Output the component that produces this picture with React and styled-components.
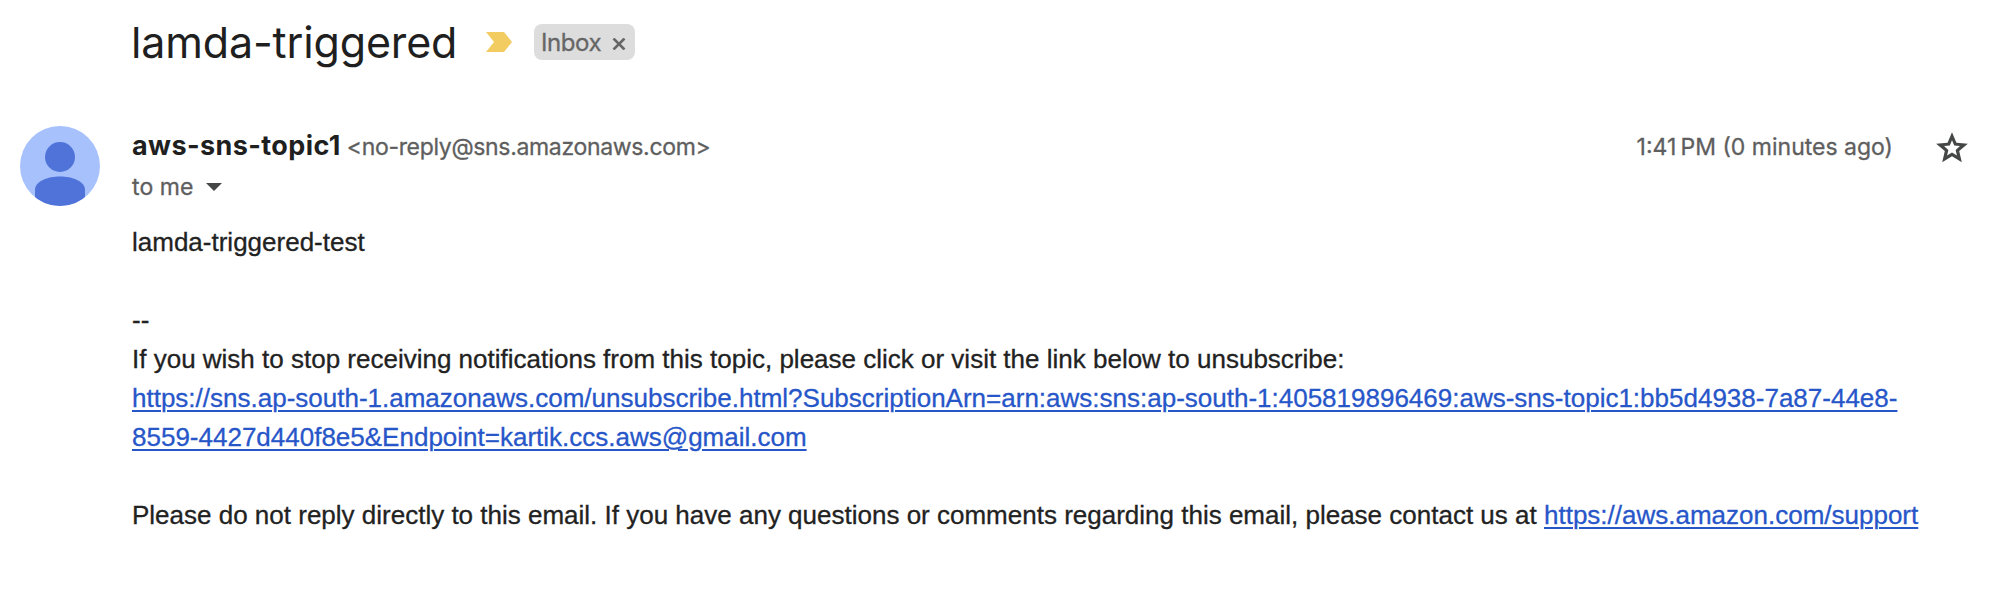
import React from "react";
import styled, { createGlobalStyle } from "styled-components";

const GlobalStyle = createGlobalStyle`
  *, *::before, *::after { box-sizing: border-box; }
  body { margin: 0; background: #fff; }
`;

const Page = styled.main`
  width: 1992px;
  height: 596px;
  overflow: hidden;
  background: #fff;
  color: #1f1f1f;
  font-family: Inter, "Liberation Sans", sans-serif;
`;

const SubjectRow = styled.header`
  display: flex;
  align-items: center;
  height: 84px;
  padding-left: 131px;
`;

const Subject = styled.h1`
  margin: 0;
  width: 355px;
  font-size: 43px;
  font-weight: 400;
  line-height: 84px;
  letter-spacing: -0.15px;
  white-space: nowrap;
`;

const Label = styled.div`
  display: flex;
  align-items: center;
  gap: 11px;
  width: 101px;
  height: 36px;
  margin-left: 22px;
  padding: 1px 0 0 7px;
  border-radius: 8px;
  background: #ddd;
  color: #666;
  font-size: 24px;
  line-height: 36px;
  letter-spacing: -0.4px;
  -webkit-text-stroke: 0.3px currentColor;

  svg { margin-top: 3px; }
`;

const Message = styled.article`
  display: grid;
  grid-template-columns: 80px 1fr;
  column-gap: 32px;
  padding: 42px 21px 0 20px;
`;

const MessageHead = styled.div`
  display: flex;
  align-items: flex-start;
  justify-content: space-between;
`;

const SenderLine = styled.div`
  display: flex;
  align-items: baseline;
  gap: 6px;
  height: 41px;
  line-height: 40px;
  white-space: nowrap;
`;

const SenderName = styled.span`
  font-size: 27px;
  font-weight: 700;
  letter-spacing: 0.4px;
`;

const Muted = styled.span`
  color: #5e5e5e;
  font-size: 23px;
  letter-spacing: ${(p) => p.$tracking || 0}px;
  -webkit-text-stroke: 0.3px currentColor;
`;

const Recipient = styled.div`
  display: flex;
  align-items: center;
  gap: 12px;
  line-height: 40px;
`;

const Meta = styled.div`
  display: flex;
  align-items: center;
  gap: 40px;
  height: 42px;
  white-space: nowrap;

  svg { margin-top: 1px; }
`;

const Body = styled.div`
  grid-column: 2;
  padding-top: 16px;
  font-family: "Liberation Sans", Arial, sans-serif;
  font-size: 26px;
  line-height: 39px;
  color: #222;
  -webkit-text-stroke: 0.3px currentColor;
`;

const Line = styled.p`
  margin: 0;
  min-height: 39px;
  white-space: nowrap;
`;

const Link = styled.a`
  color: #2756c9;
  text-decoration: underline;
  text-decoration-thickness: 2px;
  text-underline-offset: 3px;
`;

export default function App() {
  return (
    <Page>
      <GlobalStyle />
      <SubjectRow>
        <Subject>lamda-triggered</Subject>
        <svg width="26" height="20" viewBox="0 0 26 20">
          <path d="M0 0H18L26 10L18 20H0L8 10Z" fill="#f2cb61" />
        </svg>
        <Label>
          Inbox
          <svg width="14" height="12" viewBox="0 0 14 12">
            <path d="M1.5 0.5L12.5 11.5M12.5 0.5L1.5 11.5" stroke="#666" strokeWidth="2.6" />
          </svg>
        </Label>
      </SubjectRow>
      <Message>
        <svg width="80" height="80" viewBox="0 0 80 80">
          <clipPath id="disc"><circle cx="40" cy="40" r="40" /></clipPath>
          <g clipPath="url(#disc)">
            <rect width="80" height="80" fill="#a6c1fb" />
            <circle cx="40" cy="31" r="15" fill="#4f73d9" />
            <path d="M15 80V64C15 55 28 50.5 40 50.5S65 55 65 64V80Z" fill="#4f73d9" />
          </g>
        </svg>
        <MessageHead>
          <div>
            <SenderLine>
              <SenderName>aws-sns-topic1</SenderName>
              <Muted $tracking={-0.33}>&lt;no-reply@sns.amazonaws.com&gt;</Muted>
            </SenderLine>
            <Recipient>
              <Muted $tracking={0.1}>to me</Muted>
              <svg width="16" height="8" viewBox="0 0 16 8">
                <path d="M0 0H16L8 8Z" fill="#444746" />
              </svg>
            </Recipient>
          </div>
          <Meta>
            <Muted>{"1:41\u202fPM (0 minutes ago)"}</Muted>
            <svg width="38" height="38" viewBox="0 0 24 24">
              <path
                d="M22 9.24L14.81 8.62L12 2L9.19 8.63L2 9.24L7.46 13.97L5.82 21L12 17.27L18.18 21L16.55 13.97ZM12 14.86L8.88 16.74L9.71 13.19L6.95 10.8L10.59 10.48L12 7.14L13.42 10.49L17.05 10.81L14.3 13.2L15.13 16.75Z"
                fill="#444746"
                fillRule="evenodd"
              />
            </svg>
          </Meta>
        </MessageHead>
        <Body>
          <Line>lamda-triggered-test</Line>
          <Line />
          <Line>--</Line>
          <Line>
            If you wish to stop receiving notifications from this topic, please click or visit the link below to unsubscribe:
          </Line>
          <Line>
            <Link>
              https://sns.ap-south-1.amazonaws.com/unsubscribe.html?SubscriptionArn=arn:aws:sns:ap-south-1:405819896469:aws-sns-topic1:bb5d4938-7a87-44e8-
              <br />
              8559-4427d440f8e5&amp;Endpoint=kartik.ccs.aws@gmail.com
            </Link>
          </Line>
          <Line />
          <Line>
            Please do not reply directly to this email. If you have any questions or comments regarding this email, please contact us at{" "}
            <Link>https://aws.amazon.com/support</Link>
          </Line>
        </Body>
      </Message>
    </Page>
  );
}
